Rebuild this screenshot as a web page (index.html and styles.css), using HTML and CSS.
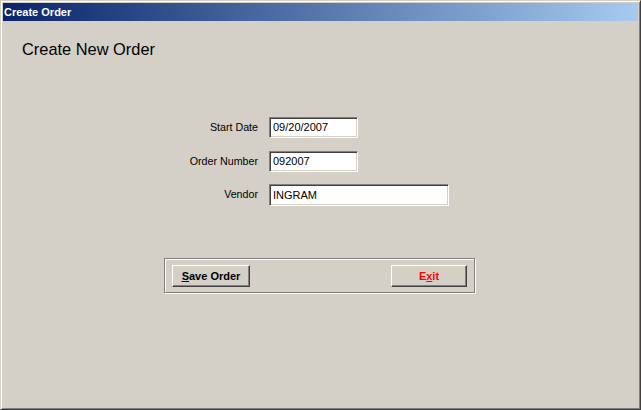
FILE: index.html
```html
<!DOCTYPE html>
<html>
<head>
<meta charset="utf-8">
<link rel="stylesheet" href="styles.css">
</head>
<body>
<div class="window">
  <div class="titlebar">Create Order</div>
  <div class="content">
    <h1 class="heading">Create New Order</h1>
    <div class="form">
      <label class="label">Start Date</label>
      <div class="field short">09/20/2007</div>
      <label class="label">Order Number</label>
      <div class="field short">092007</div>
      <label class="label">Vendor</label>
      <div class="field long">INGRAM</div>
    </div>
    <div class="group">
      <button class="btn save"><u>S</u>ave Order</button>
      <button class="btn exit">E<u>x</u>it</button>
    </div>
  </div>
</div>
</body>
</html>
```
FILE: styles.css
```css
html, body {
  margin: 0;
  padding: 0;
  background: #d4d0c8;
}
body {
  font-family: "Liberation Sans", Arial, sans-serif;
  width: 641px;
  height: 410px;
  overflow: hidden;
}
.window {
  box-sizing: border-box;
  width: 641px;
  height: 410px;
  background: #d4d0c8;
  border-top: 1px solid #d4d0c8;
  border-left: 1px solid #d4d0c8;
  border-right: 1px solid #404040;
  border-bottom: 1px solid #404040;
  box-shadow: inset 1px 1px 0 #ffffff, inset -1px -1px 0 #808080;
  padding: 2px;
  display: flex;
  flex-direction: column;
}
.titlebar {
  height: 18px;
  line-height: 18px;
  background: linear-gradient(to right, #0a246a, #a6caf0);
  color: #ffffff;
  font-weight: bold;
  font-size: 11px;
  padding-left: 1px;
}
.content {
  flex: 1;
}
.heading {
  margin: 18px 0 0 0;
  padding-left: 19px;
  font-size: 16.4px;
  font-weight: normal;
  line-height: 20px;
  height: 20px;
  color: #000;
}
.form {
  margin-top: 58px;
  display: grid;
  grid-template-columns: 255px auto;
  grid-template-rows: 22px 21px 22px;
  column-gap: 11px;
  row-gap: 12px;
  align-items: start;
}
.label {
  justify-self: end;
  font-size: 10.7px;
  line-height: 21px;
  color: #000;
}
.field {
  box-sizing: border-box;
  height: 21px;
  line-height: 19px;
  background: #ffffff;
  border-top: 1px solid #808080;
  border-left: 1px solid #808080;
  border-right: 1px solid #ffffff;
  border-bottom: 1px solid #ffffff;
  box-shadow: inset 1px 1px 0 #404040, inset -1px -1px 0 #d4d0c8;
  padding-left: 3px;
  font-size: 11px;
  color: #000;
}
.short { width: 89px; }
.long { width: 180px; height: 22px; line-height: 20px; }
.group {
  box-sizing: border-box;
  margin: 52px 0 0 161px;
  width: 311px;
  height: 35px;
  border: 1px solid #808080;
  box-shadow: 1px 1px 0 #ffffff, inset 1px 1px 0 #ffffff;
  padding: 6px 7px 5px 7px;
  display: flex;
  justify-content: space-between;
}
.btn {
  box-sizing: border-box;
  height: 22px;
  background: #d4d0c8;
  border-top: 1px solid #ffffff;
  border-left: 1px solid #ffffff;
  border-right: 1px solid #404040;
  border-bottom: 1px solid #404040;
  box-shadow: inset -1px -1px 0 #808080;
  font-family: "Liberation Sans", Arial, sans-serif;
  font-weight: bold;
  font-size: 11px;
  padding: 0;
  margin: 0;
  color: #000;
}
.save { width: 78px; }
.exit { width: 76px; color: #ff0000; }
```
